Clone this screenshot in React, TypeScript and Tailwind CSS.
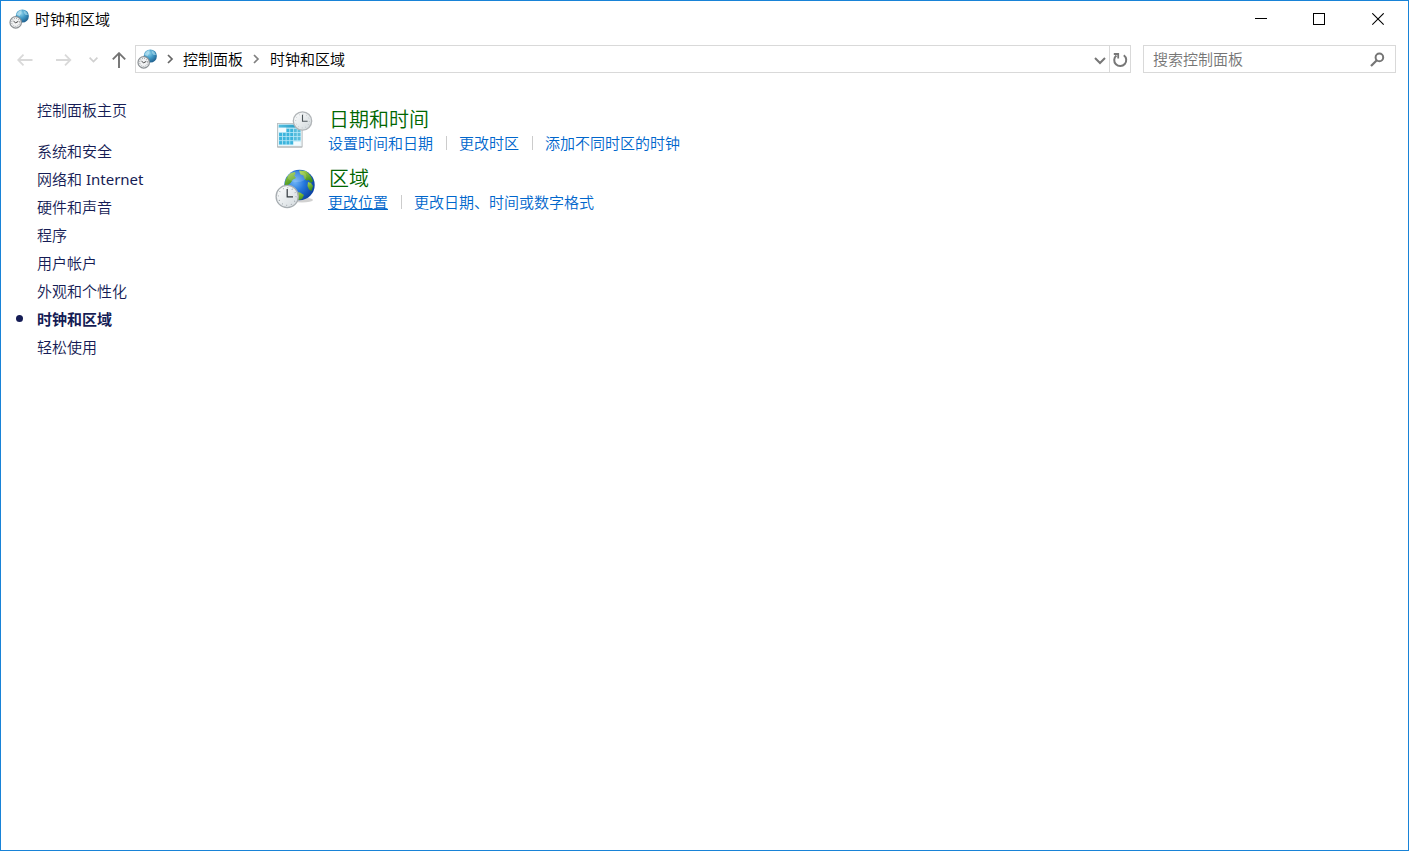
import React from "react";

const categories: { name: string; latin?: string }[] = [
  { name: "系统和安全" },
  { name: "网络和", latin: "Internet" },
  { name: "硬件和声音" },
  { name: "程序" },
  { name: "用户帐户" },
  { name: "外观和个性化" },
  { name: "时钟和区域" },
  { name: "轻松使用" },
];

const current = "时钟和区域";

interface Section {
  title: string;
  icon: React.ReactNode;
  links: string[];
}

function SmallClockIcon({ id }: { id: string }) {
  return (
    <svg width="20" height="20" viewBox="0 0 20 20" className="shrink-0" aria-hidden="true">
      <defs>
        <radialGradient id={id} cx="0.4" cy="0.3" r="0.75">
          <stop offset="0" stopColor="#8fd3ec" />
          <stop offset="0.5" stopColor="#3f97c4" />
          <stop offset="1" stopColor="#1c5a88" />
        </radialGradient>
      </defs>
      <circle cx="13.3" cy="7" r="6.6" fill={`url(#${id})`} />
      <path d="M7.4 6 Q8.5 2 12.5 1 L12.5 4 L10.5 7Z" fill="#bfe6f2" opacity="0.7" />
      <path d="M14.5 1 Q18 2.5 19 6 L16.6 6 L15 4Z" fill="#b4e2f0" opacity="0.6" />
      <circle cx="6.7" cy="13.4" r="5.7" fill="#f1f2f3" stroke="#8b9094" strokeWidth="1.2" />
      <circle cx="6.7" cy="13.4" r="4" fill="none" stroke="#777c80" strokeWidth="0.9" strokeDasharray="0.8 1.3" />
      <path d="M4.5 12.2 L6.7 13.8 L9.3 12.4" fill="none" stroke="#333" strokeWidth="0.9" />
    </svg>
  );
}

function DateTimeIcon() {
  const rows = [0, 1, 2, 3];
  const cols = [0, 1, 2, 3, 4, 5];
  return (
    <svg width="40" height="40" viewBox="0 0 40 40" aria-hidden="true">
      <defs>
        <linearGradient id="calHead" x1="0" y1="0" x2="1" y2="0">
          <stop offset="0" stopColor="#55bfe0" />
          <stop offset="1" stopColor="#1c93bd" />
        </linearGradient>
        <linearGradient id="dtFace" x1="0" y1="0" x2="1" y2="1">
          <stop offset="0" stopColor="#ffffff" />
          <stop offset="1" stopColor="#cfd6da" />
        </linearGradient>
      </defs>
      <rect x="2" y="13.5" width="25.5" height="24.4" rx="0.8" fill="#c9cccd" />
      <rect x="2.5" y="13.5" width="24.5" height="23.2" fill="#f3f8fa" stroke="#b5bbbe" strokeWidth="0.8" />
      <rect x="3.6" y="14.6" width="22.2" height="3.2" fill="url(#calHead)" />
      <rect x="3.6" y="17.8" width="22.2" height="17.4" fill="#b9e8f7" />
      <rect x="3.6" y="17.8" width="7.4" height="4.2" fill="#f2fbfe" />
      <rect x="18.4" y="31.6" width="7.4" height="3.6" fill="#f2fbfe" />
      {rows.map((r) =>
        cols.map((c) =>
          (r === 0 && c < 2) || (r === 3 && c > 3) ? null : (
            <rect
              key={`${r}-${c}`}
              x={4.1 + c * 3.7}
              y={18.8 + r * 4.1}
              width="2.9"
              height="3.3"
              fill={c > 3 ? "#58bddc" : "#3cb4dc"}
            />
          )
        )
      )}
      <circle cx="27.5" cy="11" r="9.2" fill="url(#dtFace)" stroke="#b1b5b8" strokeWidth="1.3" />
      <circle cx="27.5" cy="11" r="6.9" fill="none" stroke="#a5abb0" strokeWidth="0.9" strokeDasharray="0.6 3.01" />
      <path d="M27.5 4.8 V11.3 H32.6" fill="none" stroke="#4b5358" strokeWidth="1.1" />
    </svg>
  );
}

function RegionIcon() {
  return (
    <svg width="40" height="40" viewBox="0 0 40 40" aria-hidden="true">
      <defs>
        <radialGradient id="ocean" cx="0.35" cy="0.4" r="0.7">
          <stop offset="0" stopColor="#6fb4f5" />
          <stop offset="0.45" stopColor="#2477dc" />
          <stop offset="1" stopColor="#0a3c9b" />
        </radialGradient>
        <linearGradient id="land" x1="0" y1="0" x2="0.4" y2="1">
          <stop offset="0" stopColor="#b2d94e" />
          <stop offset="1" stopColor="#3d8f1b" />
        </linearGradient>
        <linearGradient id="regionFace" x1="0" y1="0" x2="1" y2="1">
          <stop offset="0" stopColor="#ffffff" />
          <stop offset="1" stopColor="#d3dade" />
        </linearGradient>
        <clipPath id="globeClip">
          <circle cx="24.5" cy="16" r="15.2" />
        </clipPath>
      </defs>
      <ellipse cx="27" cy="31" rx="11" ry="2.5" fill="#000" opacity="0.18" />
      <circle cx="24.5" cy="16" r="15.2" fill="url(#ocean)" />
      <g clipPath="url(#globeClip)" fill="url(#land)">
        <path d="M10 13 Q12 6 16 4 L20 3 L20.5 5 L19 6.5 L21 9 L18 10.5 L15.5 14 L13.5 15.5 L12 17 L9 18Z" />
        <path d="M24 1.5 L31 2 Q36 6 38 12 L36 14 L34 11 L31 11.5 L29 9 L28.5 6.5 L25.5 5.5Z" />
        <path d="M33 13 L36 14 L38 17 L36.5 22 L34 20.5 L32.5 17Z" />
        <path d="M20 23 L25 23.5 L29 26 L27 30 L22 32 L20 28Z" />
      </g>
      <ellipse cx="22" cy="7.5" rx="9.5" ry="5.5" fill="#fff" opacity="0.16" />
      <circle cx="12.2" cy="27.5" r="11.1" fill="url(#regionFace)" stroke="#a7adb1" strokeWidth="1.3" />
      <circle cx="12.2" cy="27.5" r="8.8" fill="none" stroke="#8c949a" strokeWidth="1.2" strokeDasharray="0.7 3.91" />
      <path d="M12.2 20 V27.8 H18" fill="none" stroke="#31383d" strokeWidth="1.2" />
    </svg>
  );
}

function Chevron({ className }: { className: string }) {
  return (
    <svg width="7" height="10" viewBox="0 0 7 10" className={className} aria-hidden="true">
      <path d="M1 1 L5 5 L1 9" fill="none" stroke="currentColor" strokeWidth="1.7" />
    </svg>
  );
}

const sections: Section[] = [
  { title: "日期和时间", icon: <DateTimeIcon />, links: ["设置时间和日期", "更改时区", "添加不同时区的时钟"] },
  { title: "区域", icon: <RegionIcon />, links: ["更改位置", "更改日期、时间或数字格式"] },
];

function TitleBar() {
  return (
    <header className="flex h-9 items-center justify-between pl-2">
      <div className="flex items-center gap-1.5">
        <SmallClockIcon id="globeTitle" />
        <h1 className="text-[15px] leading-5 font-[350] text-black">{current}</h1>
      </div>
      <div className="flex h-full">
        <button type="button" aria-label="最小化" className="flex w-[59px] items-center justify-center">
          <svg width="13" height="13" viewBox="0 0 13 13" shapeRendering="crispEdges">
            <path d="M1 5.5 H13" stroke="#000" />
          </svg>
        </button>
        <button type="button" aria-label="最大化" className="flex w-[59px] items-center justify-center">
          <svg width="13" height="13" viewBox="0 0 13 13" shapeRendering="crispEdges">
            <rect x="0.5" y="0.5" width="11" height="11" fill="none" stroke="#000" />
          </svg>
        </button>
        <button type="button" aria-label="关闭" className="flex w-[59px] items-center justify-center">
          <svg width="13" height="13" viewBox="0 0 13 13">
            <path d="M0.3 0.3 L11.7 11.7 M11.7 0.3 L0.3 11.7" stroke="#000" strokeWidth="1.1" />
          </svg>
        </button>
      </div>
    </header>
  );
}

function AddressRow() {
  return (
    <div className="mt-2 flex h-7 items-center pr-3">
      <nav aria-label="导航" className="flex h-full w-[134px] shrink-0 items-center pt-0.5 pl-4">
        <button type="button" aria-label="后退" className="flex w-4 justify-center text-[#d9d9d9]">
          <svg width="16" height="12" viewBox="0 0 16 12">
            <path d="M1 6 H15.5 M6.5 0.7 L1.2 6 L6.5 11.3" fill="none" stroke="currentColor" strokeWidth="1.8" />
          </svg>
        </button>
        <button type="button" aria-label="前进" className="ml-[23px] flex w-4 justify-center text-[#d9d9d9]">
          <svg width="16" height="12" viewBox="0 0 16 12">
            <path d="M0 6 H14.5 M9 0.7 L14.3 6 L9 11.3" fill="none" stroke="currentColor" strokeWidth="1.8" />
          </svg>
        </button>
        <button type="button" aria-label="最近浏览的位置" className="ml-[15px] flex w-3 justify-center text-[#d0d0d0]">
          <svg width="9" height="6" viewBox="0 0 9 6">
            <path d="M0.6 0.7 L4.5 4.5 L8.4 0.7" fill="none" stroke="currentColor" strokeWidth="1.7" />
          </svg>
        </button>
        <button type="button" aria-label="上移" className="ml-3 flex w-4 justify-center text-[#737373]">
          <svg width="14" height="16" viewBox="0 0 14 16">
            <path d="M7 1.4 V16 M0.8 7.4 L7 1.2 L13.2 7.4" fill="none" stroke="currentColor" strokeWidth="1.9" />
          </svg>
        </button>
      </nav>
      <div className="flex h-full min-w-0 flex-1 items-center border border-[#d9d9d9] pl-px">
        <SmallClockIcon id="globeAddress" />
        <Chevron className="ml-2.5 text-[#666]" />
        <a href="#home" className="ml-[9px] text-[15px] leading-5 font-[350] text-black">控制面板</a>
        <Chevron className="ml-2.5 text-[#808080]" />
        <a href="#clock" className="ml-2.5 text-[15px] leading-5 font-[350] text-black">{current}</a>
        <button type="button" aria-label="以前的位置" className="ml-auto flex h-full w-[18px] items-center justify-center pt-1 text-[#777]">
          <svg width="12" height="8" viewBox="0 0 12 8">
            <path d="M1 1 L6 6 L11 1" fill="none" stroke="currentColor" strokeWidth="2" />
          </svg>
        </button>
        <button type="button" aria-label="刷新" className="flex h-full w-[21px] items-center justify-center border-l border-[#d9d9d9] pt-0.5 text-[#777]">
          <svg width="16" height="16" viewBox="0 0 16 16">
            <path d="M4.4 3.4 A6 6 0 1 0 11.8 3.2" fill="none" stroke="currentColor" strokeWidth="2" />
            <path d="M1.8 2 H6.2 V6.6" fill="none" stroke="currentColor" strokeWidth="1.8" />
          </svg>
        </button>
      </div>
      <div className="ml-3 flex h-full w-[253px] shrink-0 items-center border border-[#d9d9d9] pr-2.5 pl-[9px]">
        <input
          id="search"
          type="text"
          aria-label="搜索控制面板"
          placeholder="搜索控制面板"
          className="h-[26px] min-w-0 flex-1 bg-transparent text-[15px] leading-6 font-[350] text-black outline-none placeholder:text-[#757575]"
        />
        <label htmlFor="search">
          <svg width="15" height="15" viewBox="0 0 15 15" aria-hidden="true">
            <circle cx="9.4" cy="5.4" r="3.8" fill="none" stroke="#757575" strokeWidth="2" />
            <path d="M6.8 8.2 L1 14" stroke="#757575" strokeWidth="2.2" />
          </svg>
        </label>
      </div>
    </div>
  );
}

function Sidebar() {
  return (
    <aside className="w-[274px] shrink-0 pt-[27px] pl-9 text-[15px] leading-7 font-[350] text-[#151c55]">
      <a href="#home" className="block leading-5">控制面板主页</a>
      <ul className="mt-[17px]">
        {categories.map(({ name, latin }) => (
          <li key={name} className="relative h-7">
            {name === current ? (
              <>
                <span className="absolute top-2.5 -left-[21px] size-[7px] rounded-full bg-[#151c55]" />
                <a href="#clock" aria-current="page" className="font-bold">{name}</a>
              </>
            ) : (
              <a href="#category">
                {name}
                {latin && <span className="font-normal"> {latin}</span>}
              </a>
            )}
          </li>
        ))}
      </ul>
    </aside>
  );
}

export default function App() {
  return (
    <div
      className="flex min-h-screen flex-col border border-[#1883d7] bg-white"
      style={{ fontFamily: '"Noto Sans", "Noto Sans CJK SC", sans-serif' }}
    >
      <TitleBar />
      <AddressRow />
      <div className="flex flex-1">
        <Sidebar />
        <main className="flex flex-col gap-[13px] pt-[35px]">
          {sections.map((section) => (
            <section key={section.title} className="flex h-[46px] gap-[13px]">
              <div className="mt-0.5 size-10 shrink-0">{section.icon}</div>
              <div>
                <h2 className="pl-px text-xl leading-6 font-[350] text-[#006600]">
                  <a href="#section">{section.title}</a>
                </h2>
                <ul className="flex text-[15px] leading-[22px] font-[350] text-[#0066cc]">
                  {section.links.map((link, i) => (
                    <li key={link} className="flex items-center">
                      {i > 0 && <span className="mr-3 ml-[13px] h-3.5 w-px bg-[#cccccc]" />}
                      <a href="#task" className={link === "更改位置" ? "underline underline-offset-1" : ""}>{link}</a>
                    </li>
                  ))}
                </ul>
              </div>
            </section>
          ))}
        </main>
      </div>
    </div>
  );
}
